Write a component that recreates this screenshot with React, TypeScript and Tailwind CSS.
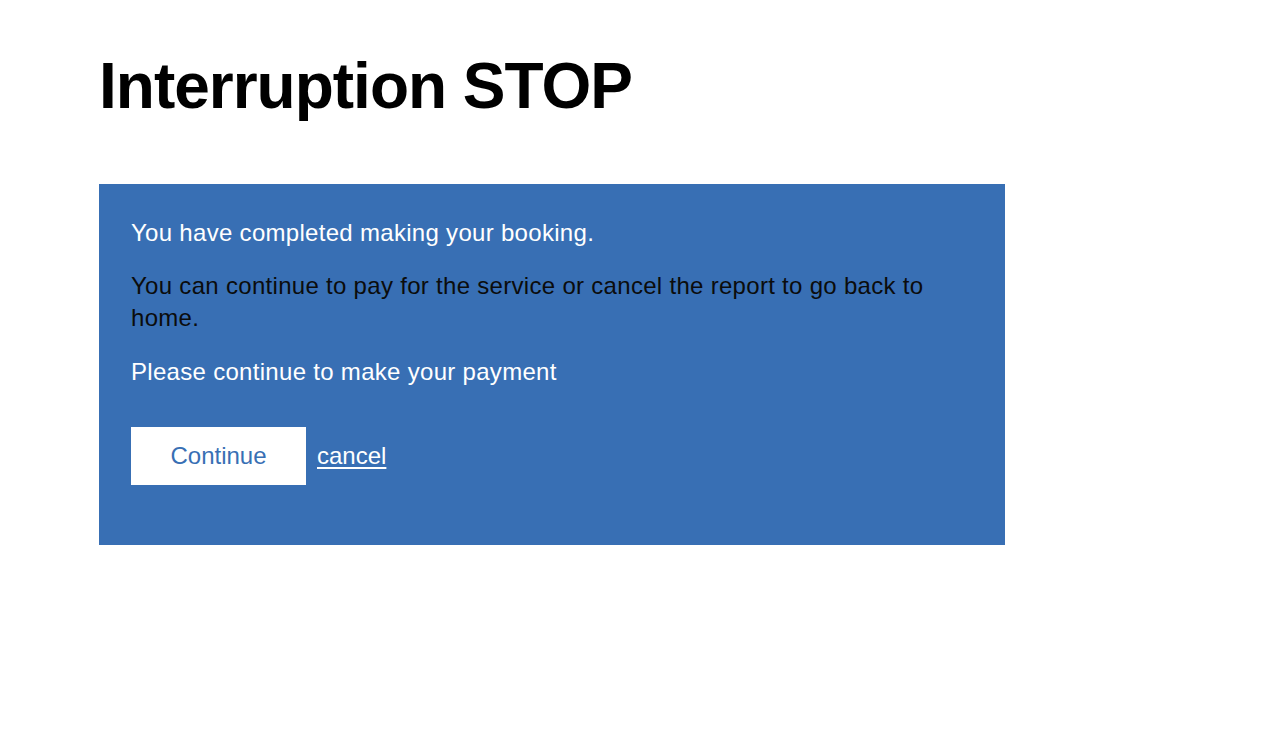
export default function App() {
  return (
    <div className="min-h-[733px] bg-white pl-[99px] pt-[54px] font-['Liberation_Sans',Arial,sans-serif]">
      <h1 className="text-[64px] font-bold leading-none tracking-[-1px] text-black">Interruption STOP</h1>

      <div className="mt-[66px] w-[906px] bg-[#386fb4] px-[32px] pt-[33px] pb-[60px] text-[24px] leading-[32px]">
        <p className="mb-[21px] tracking-[0.3px] text-white">You have completed making your booking.</p>
        <p className="mb-[22px] tracking-[0.3px] text-[#0b0c0c]">
          You can continue to pay for the service or cancel the report to go back to home.
        </p>
        <p className="tracking-[0.3px] text-white">Please continue to make your payment</p>

        <div className="mt-[39px] flex items-center gap-[11px]">
          <button className="h-[58px] w-[175px] bg-white text-[24px] text-[#386fb4]">Continue</button>
          <a href="#" className="text-white underline underline-offset-[3px]">
            cancel
          </a>
        </div>
      </div>
    </div>
  );
}
